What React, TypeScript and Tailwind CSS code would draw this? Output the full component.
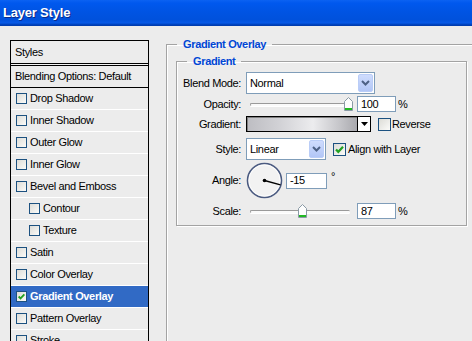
import React from "react";

function Box({ checked = false, big = false }: { checked?: boolean; big?: boolean }) {
  return (
    <div
      className={`${big ? "w-[13px] h-[13px]" : "w-[11px] h-[11px]"} shrink-0 border border-[#1c5180] bg-gradient-to-br from-[#dcdcd7] to-[#fbfbf9] flex items-center justify-center`}
    >
      {checked && (
        <svg width={big ? 11 : 9} height={big ? 11 : 9} viewBox="0 0 11 11">
          <path d="M2 5.5 L4.3 7.8 L9 2.8" stroke="#21a121" strokeWidth="2.2" fill="none" />
        </svg>
      )}
    </div>
  );
}

function ListRow({ label, indent = false, selected = false }: { label: string; indent?: boolean; selected?: boolean }) {
  return (
    <div
      className={`h-[22px] shrink-0 flex items-center border-b border-white ${indent ? "pl-[18px]" : "pl-[5px]"} ${selected ? "bg-[#316ac5] text-white font-bold" : "text-black"}`}
    >
      <Box checked={selected} />
      <span className="ml-[3px] whitespace-nowrap">{label}</span>
    </div>
  );
}

function Combo({ wide, value }: { wide: boolean; value: string }) {
  return (
    <div
      className={`${wide ? "w-[129px]" : "w-[80px]"} h-[22px] border border-[#7f9db9] bg-white flex items-center justify-between pl-[3px] pr-[1px]`}
    >
      <span>{value}</span>
      <div className="w-[15px] h-[18px] rounded-[2px] bg-gradient-to-b from-[#cfdcfd] to-[#b2c6f6] border border-[#bacdf7] flex items-center justify-center">
        <svg width="9" height="6" viewBox="0 0 9 6">
          <path d="M1 1 L4.5 4.5 L8 1" stroke="#4d6185" strokeWidth="2" fill="none" />
        </svg>
      </div>
    </div>
  );
}

function Thumb() {
  return (
    <svg width="9" height="14" viewBox="0 0 9 14">
      <path d="M0.5 4.5 L4.5 0.5 L8.5 4.5 V13.5 H0.5 Z" fill="#fdfdfd" stroke="#8a9aa6" />
      <rect x="1" y="11" width="7" height="2" fill="#22b822" />
    </svg>
  );
}

function Slider({ high }: { high: boolean }) {
  return (
    <div className="w-[111px] h-[16px] pl-[4px] relative shrink-0">
      <div className="mt-[7px] w-[100px] h-[3px] rounded-full border-t border-l border-[#9a9a9a] bg-[#fafafa] shadow-[0_1px_0_#fff]" />
      <div className={`absolute top-[1px] ${high ? "left-[98px]" : "left-[52px]"}`}>
        <Thumb />
      </div>
    </div>
  );
}

function Num({ value, wide }: { value: string; wide: boolean }) {
  return (
    <div
      className={`${wide ? "w-[41px]" : "w-[39px]"} h-[16px] border border-[#7f9db9] bg-white flex items-center pl-[3px] shrink-0`}
    >
      {value}
    </div>
  );
}

function Label({ text }: { text: string }) {
  return <div className="w-[64px] shrink-0 text-right mr-[5px] whitespace-nowrap">{text}</div>;
}

export default function App() {
  return (
    <div className="w-[472px] h-[341px] overflow-hidden bg-[#ececec] font-['Liberation_Sans',Arial,sans-serif] text-[11px] leading-[13px] tracking-[-0.35px] text-black">
      <div className="h-[26px] flex items-center pl-[3px] bg-[linear-gradient(to_bottom,#0b62f2_0%,#0058ee_12%,#0054e3_45%,#0051dc_75%,#0759e6_88%,#0044c0_94%,#003aa8_100%)]">
        <span className="text-white font-bold text-[13px] leading-[16px] tracking-[-0.2px] [text-shadow:1px_1px_0_#0a2a8a]">Layer Style</span>
      </div>
      <div className="flex">
        <div className="pl-[10px] pt-[14px] shrink-0">
          <div className="w-[139px] h-[320px] border border-black flex flex-col">
            <div className="h-[22px] shrink-0 flex items-center pl-[4px]">Styles</div>
            <div className="h-[3px] shrink-0 border-y border-black bg-[#f4f4f4]" />
            <div className="h-[22px] shrink-0 flex items-center pl-[4px] border-b border-black whitespace-nowrap">Blending Options: Default</div>
            <ListRow label="Drop Shadow" />
            <ListRow label="Inner Shadow" />
            <ListRow label="Outer Glow" />
            <ListRow label="Inner Glow" />
            <ListRow label="Bevel and Emboss" />
            <ListRow label="Contour" indent />
            <ListRow label="Texture" indent />
            <ListRow label="Satin" />
            <ListRow label="Color Overlay" />
            <ListRow label="Gradient Overlay" selected />
            <ListRow label="Pattern Overlay" />
            <ListRow label="Stroke" />
          </div>
        </div>
        <div className="ml-[17px] pt-[12px] shrink-0">
          <fieldset className="w-[330px] h-[320px] p-0 m-0 border border-[#a3a3a3] shadow-[inset_1px_1px_0_#fff,1px_1px_0_#fff]">
            <legend className="ml-[10px] px-[6px] text-[#0046d5] font-bold leading-[13px]">Gradient Overlay</legend>
            <div className="pl-[9px]">
              <fieldset className="w-[291px] mt-[4px] p-0 m-0 border border-[#a3a3a3] shadow-[inset_1px_1px_0_#fff,1px_1px_0_#fff]">
                <legend className="ml-[10px] px-[6px] text-[#0046d5] font-bold leading-[13px]">Gradient</legend>
                <div className="pt-[4px] pb-[6px] flex flex-col">
                  <div className="h-[22px] flex items-center">
                    <Label text="Blend Mode:" />
                    <Combo wide value="Normal" />
                  </div>
                  <div className="mt-[2px] h-[16px] flex items-center">
                    <Label text="Opacity:" />
                    <Slider high />
                    <Num value="100" wide={false} />
                    <span className="ml-[2px]">%</span>
                  </div>
                  <div className="mt-[4px] h-[16px] flex items-center">
                    <Label text="Gradient:" />
                    <div className="w-[112px] h-[16px] border border-black shadow-[inset_1px_1px_0_#808080] bg-[linear-gradient(to_right,#bdbdc2_0%,#d2d2d6_30%,#ececee_60%,#c4c4c8_85%,#a9a9ae_100%)]" />
                    <div className="w-[13px] h-[16px] border-y border-r border-black bg-white flex items-center justify-center">
                      <svg width="7" height="4" viewBox="0 0 7 4">
                        <path d="M0 0 H7 L3.5 4 Z" fill="#000" />
                      </svg>
                    </div>
                    <div className="ml-[7px]">
                      <Box big />
                    </div>
                    <span className="ml-[1px]">Reverse</span>
                  </div>
                  <div className="mt-[6px] h-[22px] flex items-center">
                    <Label text="Style:" />
                    <Combo wide={false} value="Linear" />
                    <div className="ml-[7px]">
                      <Box big checked />
                    </div>
                    <span className="ml-[2px]">Align with Layer</span>
                  </div>
                  <div className="mt-[2px] h-[37px] flex items-center">
                    <Label text="Angle:" />
                    <svg width="37" height="37" viewBox="0 0 37 37" className="shrink-0">
                      <circle cx="18.5" cy="18.5" r="17" fill="#f2f2f2" stroke="#4a5a80" strokeWidth="1.6" />
                      <circle cx="18.5" cy="18.5" r="15.6" fill="none" stroke="#ffffff" strokeWidth="0.8" />
                      <line x1="18.5" y1="18.5" x2="34.5" y2="22.8" stroke="#000" strokeWidth="1.3" />
                      <circle cx="18.5" cy="18.5" r="1.8" fill="#000" />
                    </svg>
                    <div className="ml-[3px]">
                      <Num value="-15" wide />
                    </div>
                    <span className="ml-[4px] self-start mt-[8px]">°</span>
                  </div>
                  <div className="mt-[4px] h-[16px] flex items-center">
                    <Label text="Scale:" />
                    <Slider high={false} />
                    <Num value="87" wide={false} />
                    <span className="ml-[2px]">%</span>
                  </div>
                </div>
              </fieldset>
            </div>
          </fieldset>
        </div>
      </div>
    </div>
  );
}
